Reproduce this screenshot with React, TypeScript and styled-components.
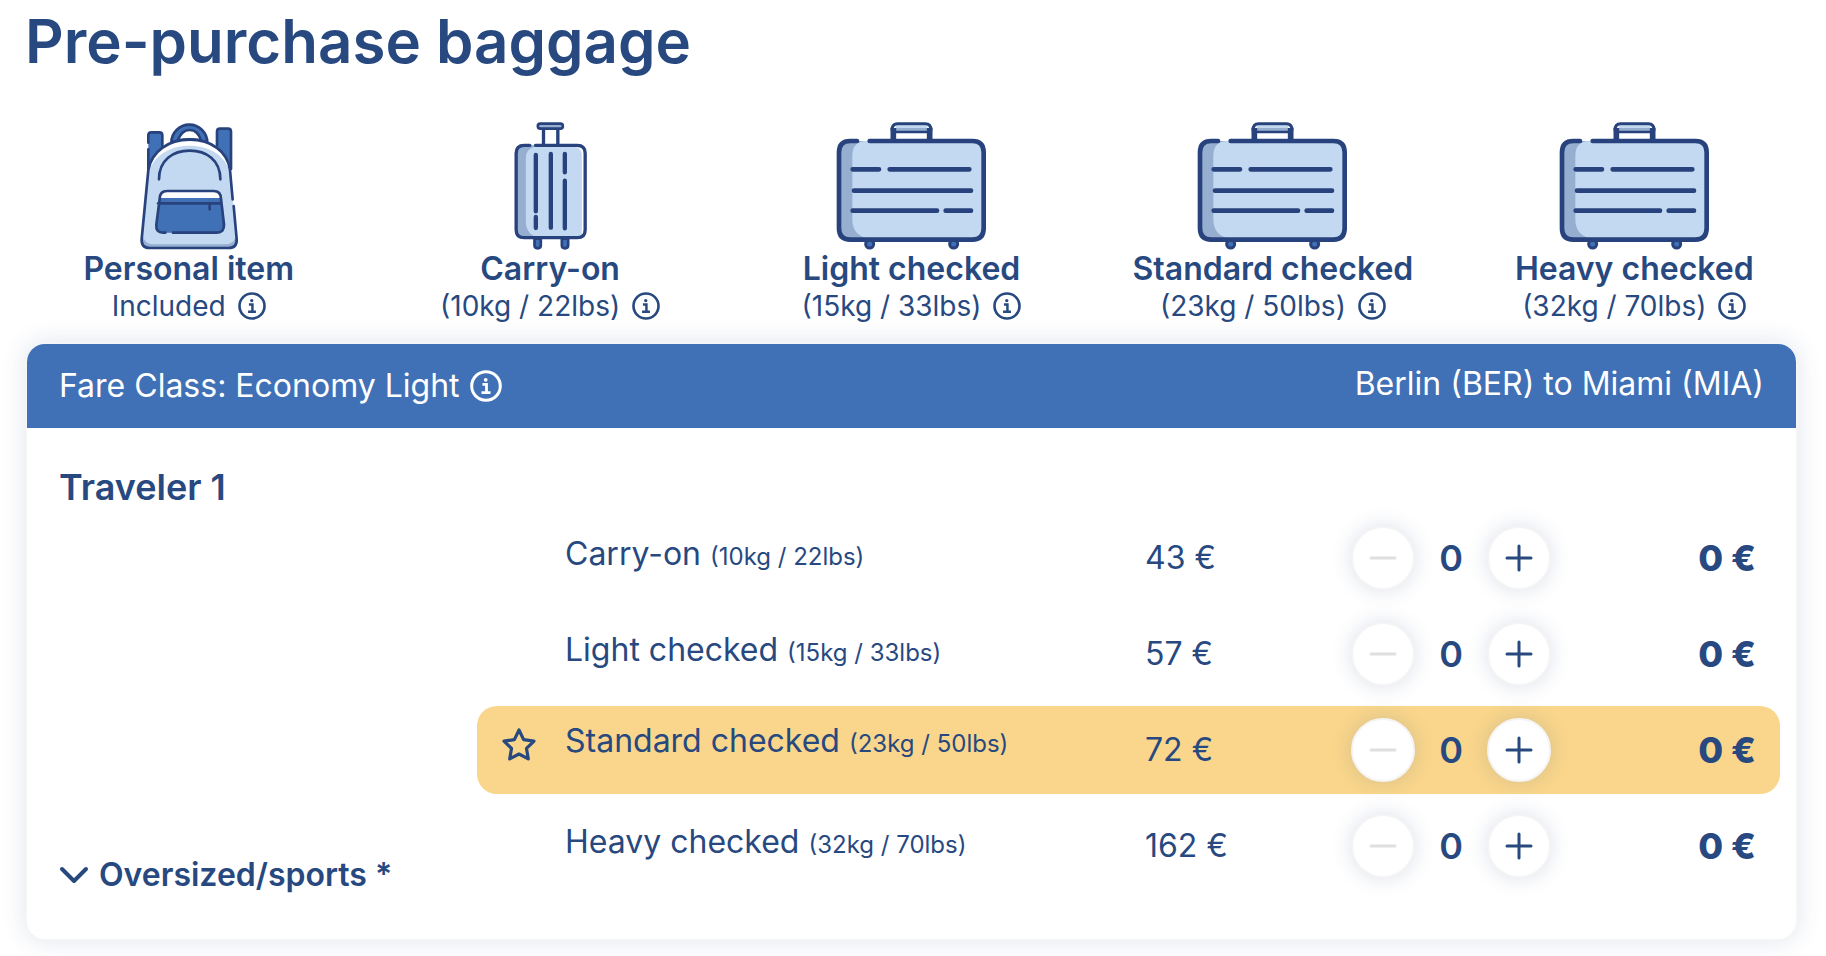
import React from "react";
import styled, { createGlobalStyle } from "styled-components";

const navy = "#27497f";
const outline = "#27427c";
const lightBlue = "#c3d9f1";
const shade = "#96afd1";
const midBlue = "#4070b5";

const GlobalStyle = createGlobalStyle`
  * { box-sizing: border-box; }
  body {
    margin: 0;
    background: #fff;
    color: ${navy};
    font-family: Inter, "Liberation Sans", sans-serif;
    font-size: 32px;
    line-height: 40px;
  }
  button { font: inherit; color: inherit; }
`;

const Page = styled.main`
  padding: 5px 28px 15px 25px;
`;

const Title = styled.h1`
  margin: 0;
  font-size: 60px;
  line-height: 72px;
  font-weight: 600;
`;

const BagTypes = styled.ul`
  display: grid;
  grid-template-columns: repeat(5, 1fr);
  list-style: none;
  margin: 45px -17px 0;
  padding: 0;
`;

const BagType = styled.li`
  display: flex;
  flex-direction: column;
  align-items: center;
`;

const BagIcon = styled.svg`
  display: block;
  height: 128px;
`;

const BagName = styled.h2`
  margin: 0;
  font-size: 32px;
  line-height: 38px;
  font-weight: 600;
`;

const BagLimit = styled.p`
  display: flex;
  align-items: center;
  gap: 12px;
  margin: 0;
  font-size: 28px;
  line-height: 36px;
`;

const InfoButton = styled.button<{ $size: number }>`
  display: block;
  width: ${(p) => p.$size}px;
  height: ${(p) => p.$size}px;
  padding: 0;
  border: 0;
  background: none;
  cursor: pointer;
`;

const Fill = styled.svg`
  display: block;
  width: 100%;
  height: 100%;
`;

const Card = styled.section`
  margin-top: 18px;
  border: 2px solid #f4f5f7;
  border-radius: 20px;
  background: #fff;
  box-shadow: 0 0 24px rgba(39, 73, 127, 0.14);
`;

const CardHeader = styled.header`
  display: flex;
  justify-content: space-between;
  align-items: flex-start;
  height: 84px;
  padding: 20px 32px 0;
  border-radius: 18px 18px 0 0;
  background: ${midBlue};
  color: #fff;
`;

const FareClass = styled.span`
  display: flex;
  align-items: center;
  gap: 10px;
  padding-top: 2px;
`;

const Route = styled.span``;

const CardBody = styled.div`
  display: grid;
  grid-template-columns: 450px 1fr;
  padding: 0 16px 44px 0;
`;

const Traveler = styled.div`
  display: flex;
  flex-direction: column;
  justify-content: space-between;
  align-items: flex-start;
  padding: 37px 0 0 32px;
`;

const TravelerName = styled.h3`
  margin: 0;
  font-size: 36px;
  line-height: 44px;
  font-weight: 600;
`;

const Expander = styled.button`
  display: flex;
  align-items: center;
  gap: 10px;
  padding: 0;
  border: 0;
  background: none;
  font-weight: 600;
  line-height: 40px;
  cursor: pointer;
`;

const Options = styled.ul`
  display: flex;
  flex-direction: column;
  gap: 8px;
  list-style: none;
  margin: 0;
  padding: 86px 0 5px;
`;

const Option = styled.li<{ $highlighted?: boolean }>`
  display: grid;
  grid-template-columns: 88px 580px 206px 200px 1fr;
  align-items: center;
  height: 88px;
  padding-right: 24px;
  border-radius: 20px;
  background: ${(p) => (p.$highlighted ? "#f9d68b" : "transparent")};
`;

const Mark = styled.span`
  padding: 0 0 4px 24px;
`;

const OptionName = styled.span<{ $raised?: boolean }>`
  padding-bottom: ${(p) => (p.$raised ? 16 : 6)}px;
`;

const Small = styled.small`
  font-size: 24px;
`;

const Price = styled.span``;

const Stepper = styled.div`
  display: flex;
  align-items: center;
  justify-content: space-between;
`;

const StepButton = styled.button`
  width: 64px;
  height: 64px;
  padding: 16px;
  border: 2px solid #f4f4f5;
  border-radius: 50%;
  background: #fff;
  box-shadow: 0 0 20px rgba(39, 73, 127, 0.17);
  cursor: pointer;
  &:disabled { color: #dfdfdf; cursor: default; }
`;

const Count = styled.output`
  font-size: 36px;
  font-weight: 600;
`;

const Total = styled.strong`
  font-size: 36px;
  font-weight: 800;
  text-align: right;
`;

function Info({ size, about }: { size: number; about: string }) {
  return (
    <InfoButton type="button" $size={size} aria-label={`About ${about}`}>
      <Fill viewBox="0 0 32 32" fill="none" stroke="currentColor" strokeWidth="3">
        <circle cx="16" cy="16" r="14.3" />
        <path d="M12.5 14.3h4v8M11.5 22.6h9" strokeWidth="2.8" />
        <circle cx="15.7" cy="9.8" r="1.9" fill="currentColor" stroke="none" />
      </Fill>
    </InfoButton>
  );
}

function Backpack() {
  return (
    <BagIcon viewBox="58 36 300 384" width="100" fill="none" stroke={outline} strokeWidth="8" strokeLinecap="round" strokeLinejoin="round" aria-hidden="true">
      <path d="M86 180V76q0-9 9-9h24q9 0 9 9v40z" fill={midBlue} stroke="none" />
      <path d="M292 110V65q0-9 9-9h24q9 0 9 9v115z" fill={midBlue} stroke="none" />
      <path d="M86 98V76q0-9 9-9h24q9 0 9 9v32M86 118v60M292 106V65q0-9 9-9h24q9 0 9 9v112" />
      <path d="M155 98a54 54 0 0 1 108 0l-19-6a37 37 0 0 0-70 0z" fill={midBlue} />
      <path d="M175 92q10-32 35-32t34 32q-34-8-69 0z" fill="#fff" />
      <path d="M86 180C96 124 146 89 210 89s114 36 121 91l20 207q2 27-24 27H90q-26 0-24-27z" fill="#fff" stroke="none" />
      <path d="M86 190C100 136 152 107 210 107s108 28 121 83l20 197q2 27-24 27H90q-26 0-24-27z" fill={lightBlue} stroke="none" />
      <path d="M67 370q5 33 34 33h216q29 0 34-33v25q0 19-24 19H90q-24 0-24-24z" fill={shade} stroke="none" />
      <path d="M339 268l-8-88C324 124 274 89 210 89S96 124 86 180L66 387q-2 27 24 27h237q26 0 24-27l-9-99" />
      <path d="M118 208c0-58 42-86 92-86s92 28 92 86" />
      <path d="M120 267q0-24 22-24h140q22 0 22 24l9 77q1 24-21 24H130q-22 0-20-24z" fill={midBlue} stroke="none" />
      <path d="M120 264q0-21 22-21h140q22 0 22 21z" fill="#fff" stroke="none" />
      <path d="M137 368h-7q-22 0-20-24l10-77q0-24 22-24h140q22 0 22 24l9 77q1 24-21 24H160M115 280h190M270 282v16" />
    </BagIcon>
  );
}

function Trolley() {
  return (
    <BagIcon viewBox="70 36 224 384" width="75" fill="none" stroke={outline} strokeWidth="10" strokeLinecap="round" strokeLinejoin="round" aria-hidden="true">
      <path d="M161 58v44M204 58v44" />
      <rect x="144" y="41" width="75" height="15" rx="7" fill={shade} strokeWidth="8" />
      <path d="M134 386h19v20q0 9-9.500 9t-9.500-9zM216 386h19v20q0 9-9.500 9t-9.500-9z" fill={midBlue} strokeWidth="8" />
      <rect x="79" y="106" width="207" height="277" rx="24" fill="#fff" stroke="none" />
      <path d="M79 130q0-24 24-24h45v277h-45q-24 0-24-24z" fill={shade} stroke="none" />
      <path d="M134 110h115q27 0 27 26v247H144q-36-12-36-48V143q0-25 26-33z" fill={lightBlue} stroke="none" />
      <path d="M120 106h-17q-24 0-24 24v229q0 24 24 24h159q24 0 24-24V130q0-24-24-24H137" />
      <path d="M138 135v169M138 321v33M183 132v221M225 132v55M225 212v143" strokeWidth="13" />
    </BagIcon>
  );
}

function Suitcase() {
  return (
    <BagIcon viewBox="50 36 453 384" width="151" fill="none" stroke={outline} strokeWidth="14" strokeLinecap="round" strokeLinejoin="round" aria-hidden="true">
      <path d="M229 46h95v17h-95z" fill={lightBlue} stroke="none" />
      <path d="M229 54h95v9h-95z" fill={shade} stroke="none" />
      <path d="M218 60q0-19 17-19h83q17 0 17 19" strokeWidth="9" />
      <path d="M222 90V54M331 90V54" strokeWidth="17" strokeLinecap="butt" />
      <path d="M230 66h94" strokeWidth="8" />
      <circle cx="151" cy="402" r="12" fill={midBlue} strokeWidth="9" />
      <circle cx="403" cy="402" r="12" fill={midBlue} strokeWidth="9" />
      <rect x="59" y="93" width="434" height="296" rx="34" fill={lightBlue} stroke="none" />
      <path d="M93 93h50q-44 0-44 44v190q0 48 44 58v4H93q-34 0-34-34V127q0-34 34-34z" fill={shade} stroke="none" />
      <path d="M113 93H93q-34 0-34 34v228q0 34 34 34h366q34 0 34-34V127q0-34-34-34H151" />
      <path d="M100 178h79M211 178h239M104 242h351M100 302h253M379 302h76" />
    </BagIcon>
  );
}

const bagTypes = [
  { name: "Personal item", limit: "Included", Icon: Backpack },
  { name: "Carry-on", limit: "(10kg / 22lbs)", Icon: Trolley },
  { name: "Light checked", limit: "(15kg / 33lbs)", Icon: Suitcase },
  { name: "Standard checked", limit: "(23kg / 50lbs)", Icon: Suitcase },
  { name: "Heavy checked", limit: "(32kg / 70lbs)", Icon: Suitcase },
];

const options = [
  { name: "Carry-on", limit: "(10kg / 22lbs)", price: 43 },
  { name: "Light checked", limit: "(15kg / 33lbs)", price: 57 },
  { name: "Standard checked", limit: "(23kg / 50lbs)", price: 72, recommended: true },
  { name: "Heavy checked", limit: "(32kg / 70lbs)", price: 162 },
];

export default function App() {
  const [counts, setCounts] = React.useState(options.map(() => 0));
  const change = (index: number, by: number) =>
    setCounts((all) => all.map((n, i) => (i === index ? Math.max(0, n + by) : n)));

  return (
    <Page>
      <GlobalStyle />
      <Title>Pre-purchase baggage</Title>
      <BagTypes>
        {bagTypes.map(({ name, limit, Icon }) => (
          <BagType key={name}>
            <Icon />
            <BagName>{name}</BagName>
            <BagLimit>
              {limit}
              <Info size={28} about={name} />
            </BagLimit>
          </BagType>
        ))}
      </BagTypes>
      <Card>
        <CardHeader>
          <FareClass>
            Fare Class: Economy Light
            <Info size={32} about="fare class" />
          </FareClass>
          <Route>Berlin (BER) to Miami (MIA)</Route>
        </CardHeader>
        <CardBody>
          <Traveler>
            <TravelerName>Traveler 1</TravelerName>
            <Expander type="button" aria-expanded={false}>
              <svg width="30" height="18" viewBox="0 0 30 18" fill="none" stroke="currentColor" strokeWidth="4" strokeLinecap="round" strokeLinejoin="round" aria-hidden="true">
                <path d="M3 3l12 12L27 3" />
              </svg>
              Oversized/sports *
            </Expander>
          </Traveler>
          <Options>
            {options.map((o, i) => (
              <Option key={o.name} $highlighted={o.recommended}>
                <Mark>
                  {o.recommended && (
                    <svg width="36" height="34" viewBox="0 0 36 34" fill="none" stroke="currentColor" strokeWidth="3.200" strokeLinejoin="round" role="img" aria-label="Recommended">
                      <path d="M18 3l4.600 9.600 10.400 1.500-7.500 7.300 1.800 10.500L18 27l-9.300 4.900 1.800-10.500L3 14.100l10.400-1.500z" />
                    </svg>
                  )}
                </Mark>
                <OptionName $raised={o.recommended}>
                  {o.name} <Small>{o.limit}</Small>
                </OptionName>
                <Price>{o.price} €</Price>
                <Stepper>
                  <StepButton type="button" disabled={counts[i] === 0} onClick={() => change(i, -1)} aria-label={`Remove ${o.name}`}>
                    <Fill viewBox="0 0 28 28" stroke="currentColor" strokeWidth="3" strokeLinecap="round">
                      <path d="M2 14h24" />
                    </Fill>
                  </StepButton>
                  <Count>{counts[i]}</Count>
                  <StepButton type="button" onClick={() => change(i, 1)} aria-label={`Add ${o.name}`}>
                    <Fill viewBox="0 0 28 28" stroke="currentColor" strokeWidth="3" strokeLinecap="round">
                      <path d="M2 14h24M14 2v24" />
                    </Fill>
                  </StepButton>
                </Stepper>
                <Total>{counts[i] * o.price} €</Total>
              </Option>
            ))}
          </Options>
        </CardBody>
      </Card>
    </Page>
  );
}
